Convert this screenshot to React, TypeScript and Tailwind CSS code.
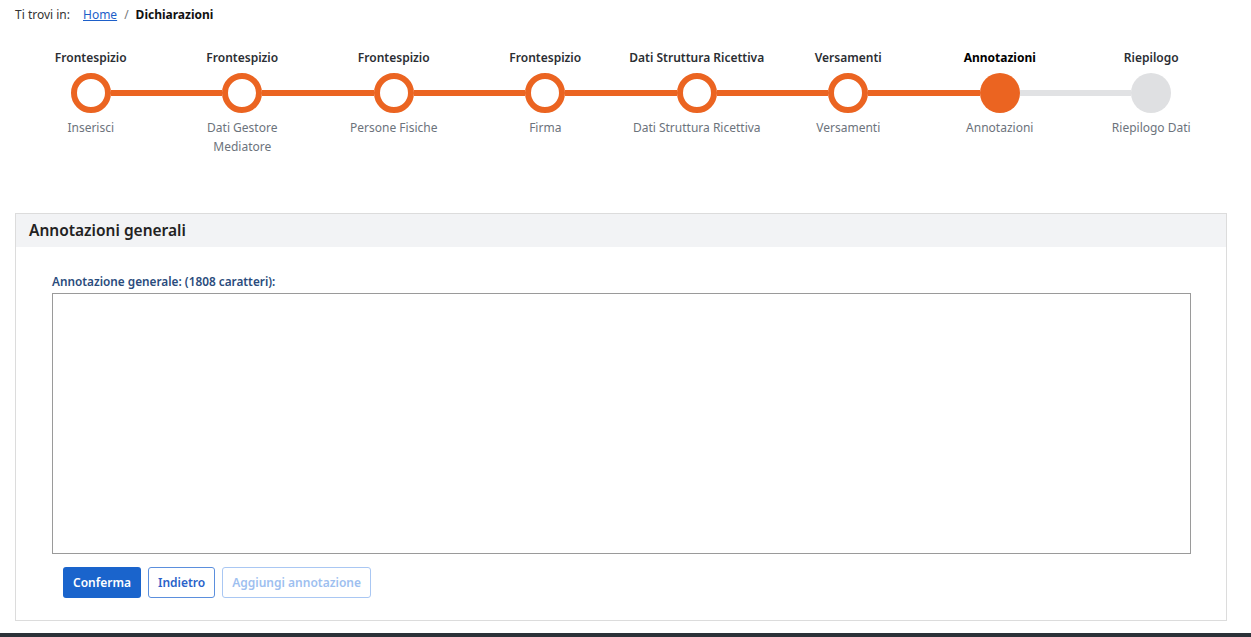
import React from 'react';

type Step = {
  title: string;
  sub: string[];
};

const steps: Step[] = [
  { title: 'Frontespizio', sub: ['Inserisci'] },
  { title: 'Frontespizio', sub: ['Dati Gestore', 'Mediatore'] },
  { title: 'Frontespizio', sub: ['Persone Fisiche'] },
  { title: 'Frontespizio', sub: ['Firma'] },
  { title: 'Dati Struttura Ricettiva', sub: ['Dati Struttura Ricettiva'] },
  { title: 'Versamenti', sub: ['Versamenti'] },
  { title: 'Annotazioni', sub: ['Annotazioni'] },
  { title: 'Riepilogo', sub: ['Riepilogo Dati'] },
];

const ACTIVE = 6;

const StepItem: React.FC<{ step: Step; index: number }> = ({ step, index }) => {
  const isFirst = index === 0;
  const isLast = index === steps.length - 1;
  const leftDone = index <= ACTIVE;
  const rightDone = index < ACTIVE;

  return (
    <div className="flex flex-col items-center">
      <span
        className={
          index === ACTIVE
            ? 'text-[12px] leading-[19px] font-bold text-black whitespace-nowrap'
            : 'text-[12px] leading-[19px] font-semibold text-[#2b2e33] whitespace-nowrap'
        }
      >
        {step.title}
      </span>

      {/* Circle row with connecting segments */}
      <div className="flex items-center w-full mt-[6px]">
        <div
          className={
            isFirst
              ? 'flex-1 h-[6px]'
              : leftDone
              ? 'flex-1 h-[6px] bg-[#eb6421]'
              : 'flex-1 h-[6px] bg-[#e1e2e4]'
          }
        />
        {index < ACTIVE && (
          <div className="w-10 h-10 rounded-full border-[6px] border-[#eb6421] bg-white shrink-0" />
        )}
        {index === ACTIVE && <div className="w-10 h-10 rounded-full bg-[#eb6421] shrink-0" />}
        {index > ACTIVE && <div className="w-10 h-10 rounded-full bg-[#dfe0e2] shrink-0" />}
        <div
          className={
            isLast
              ? 'flex-1 h-[6px]'
              : rightDone
              ? 'flex-1 h-[6px] bg-[#eb6421]'
              : 'flex-1 h-[6px] bg-[#e1e2e4]'
          }
        />
      </div>

      <div className="mt-[5px] flex flex-col items-center text-[12px] leading-[19px] text-[#6c737c]">
        {step.sub.map((line, i) => (
          <span key={i} className="whitespace-nowrap">
            {line}
          </span>
        ))}
      </div>
    </div>
  );
};

export default function App() {
  return (
    <div className="h-[637px] flex flex-col bg-white font-['Noto_Sans',sans-serif] text-[#1f2328]">
      <div className="flex-1 pl-[15px] pr-[24px]">
        {/* Breadcrumb */}
        <div className="pt-[5px] flex items-center text-[12px] leading-[19px]">
          <span className="text-[#333]">Ti trovi in:</span>
          <a href="#" className="ml-[13px] text-[#1d5fc9] underline">
            Home
          </a>
          <span className="mx-[7px] text-[#777]">/</span>
          <span className="font-bold text-[#111]">Dichiarazioni</span>
        </div>

        {/* Stepper */}
        <div className="grid grid-cols-8 mt-[24px]">
          {steps.map((s, i) => (
            <StepItem key={i} step={s} index={i} />
          ))}
        </div>

        {/* Panel */}
        <div className="mt-[57px] border border-[#dcdcdc]">
          <div className="h-[33px] bg-[#f2f3f5] flex items-center pl-[13px]">
            <h2 className="text-[15.5px] font-semibold text-[#222] leading-none">Annotazioni generali</h2>
          </div>
          <div className="pl-[36px] pr-[35px] pt-[25px] pb-[22px]">
            <label className="block text-[11.8px] leading-[18px] font-semibold text-[#2a4b7c]">
              Annotazione generale: (1808 caratteri):
            </label>
            <textarea className="block w-full h-[261px] mt-[3px] border border-[#9a9a9a] resize-none outline-none" />
            <div className="flex gap-[7px] mt-[13px] pl-[11px]">
              <button className="h-[31px] px-[10px] rounded-[3px] bg-[#1a64cc] text-white text-[12px] font-semibold">
                Conferma
              </button>
              <button className="h-[31px] px-[9px] rounded-[3px] border border-[#5b8fdd] bg-white text-[#2a62c9] text-[12px] font-semibold">
                Indietro
              </button>
              <button
                disabled
                className="h-[31px] px-[9px] rounded-[3px] border border-[#a9c7f3] bg-white text-[#9ebff0] text-[12px] font-semibold"
              >
                Aggiungi annotazione
              </button>
            </div>
          </div>
        </div>
      </div>
      <div className="h-[4px] bg-[#2b3138]" />
    </div>
  );
}
